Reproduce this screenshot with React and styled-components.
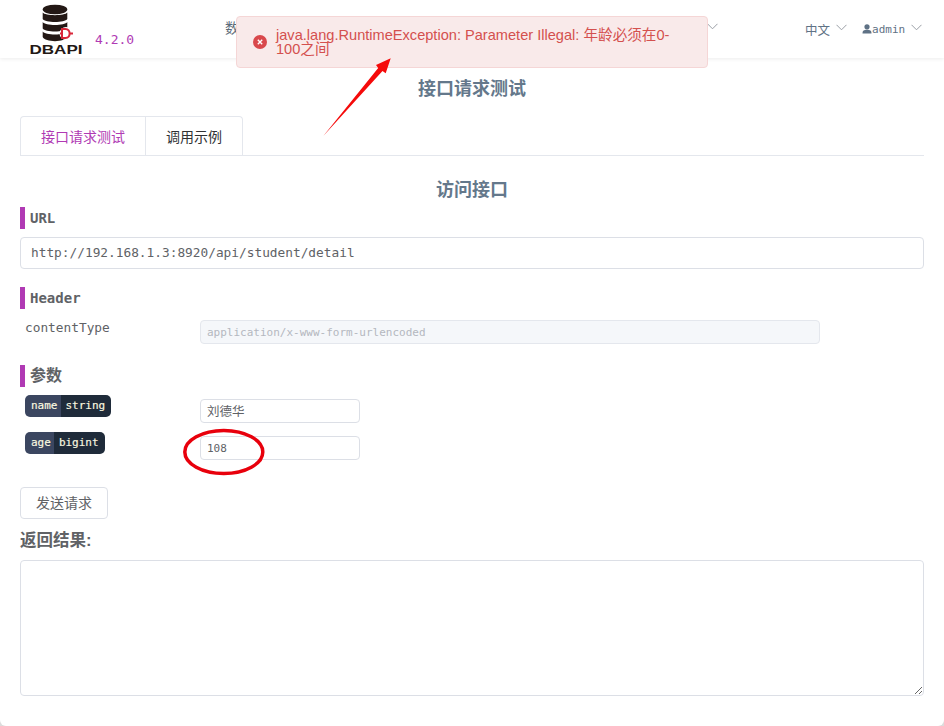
import React from "react";
import styled, { createGlobalStyle } from "styled-components";

const GlobalStyle = createGlobalStyle`
  html, body {
    margin: 0;
    padding: 0;
    background: #dcdcdc;
  }
  * {
    box-sizing: border-box;
  }
  body {
    font-family: "DejaVu Sans Mono", "Noto Sans CJK SC", monospace;
  }
`;

const cjkSans = `"Liberation Sans", "Noto Sans CJK SC", sans-serif`;
const mono = `"DejaVu Sans Mono", "Noto Sans CJK SC", monospace`;

const Page = styled.div`
  position: relative;
  width: 944px;
  height: 726px;
  overflow: hidden;
  background: #fff;
  border-radius: 0 0 6px 6px;
`;

const Header = styled.header`
  height: 58px;
  display: flex;
  align-items: flex-start;
  background: #fff;
  box-shadow: 0 1px 4px rgba(0, 0, 0, 0.08);
`;

const LogoBlock = styled.div`
  width: 66px;
  height: 54px;
  margin: 4px 0 0 29px;
`;

const Version = styled.span`
  margin: 33px 0 0 0;
  width: 130px;
  font-size: 13px;
  line-height: 14px;
  color: #b03ab4;
`;

const Nav = styled.nav`
  flex: 1;
  display: flex;
  justify-content: space-between;
  padding: 20px 0 0 0;
  color: #5c6b7a;
  font-family: ${cjkSans};
  font-size: 14px;
  line-height: 16px;
`;

const NavEnd = styled.div`
  margin: 0 87px 0 0;
  display: flex;
  align-items: center;
  height: 16px;
`;

const Chevron = ({ className }) => (
  <svg className={className} width="11" height="7" viewBox="0 0 11 7" fill="none">
    <path d="M0.5 0.8 L5.5 5.8 L10.5 0.8" stroke="#9a9fa6" strokeWidth="1" />
  </svg>
);

const HeaderChevron = styled(Chevron)`
  flex: none;
  margin: 0 0 3px 6px;
`;

const UserMenu = styled.div`
  flex: none;
  width: 139px;
  padding: 21px 0 0 0;
  display: flex;
  align-items: center;
  height: 37px;
  color: #5f7285;
`;

const Lang = styled.span`
  font-family: ${cjkSans};
  font-size: 12.5px;
  white-space: nowrap;
`;

const UserName = styled.span`
  display: inline-flex;
  align-items: center;
  font-size: 11px;
  margin-left: 15px;
`;

const Main = styled.main`
  padding: 0 20px;
`;

const PageTitle = styled.h2`
  margin: 0;
  padding-top: 20px;
  height: 58px;
  text-align: center;
  font: bold 18px/22px ${cjkSans};
  color: #64788b;
`;

const Tabs = styled.div`
  display: flex;
  height: 40px;
  border-bottom: 1px solid #e4e7ed;
`;

const Tab = styled.div`
  height: 40px;
  padding: 0 20px 2px;
  display: flex;
  align-items: center;
  font: 14px ${cjkSans};
  color: ${(p) => (p.$active ? "#b03ab4" : "#303133")};
  border: 1px solid #e4e7ed;
  border-bottom: none;
  border-left-width: ${(p) => (p.$active ? "1px" : "0")};
  border-radius: ${(p) => (p.$active ? "4px 0 0 0" : "0 4px 0 0")};
`;

const SectionTitle = styled.h2`
  margin: 23px 0 0;
  height: 24px;
  text-align: center;
  font: bold 18px/22px ${cjkSans};
  color: #64788b;
`;

const Mark = styled.div`
  display: flex;
  align-items: center;
  height: 22px;
  margin-top: ${(p) => p.$top}px;
  padding: 0 0 ${(p) => (p.$size ? 4 : 0)}px 5px;
  border-left: 5px solid #b03ab4;
  font-weight: bold;
  font-size: ${(p) => p.$size || 14}px;
  color: #606266;
`;

const UrlInput = styled.div`
  margin-top: 8px;
  height: 32px;
  padding: 0 10px 2px;
  display: flex;
  align-items: center;
  border: 1px solid #dcdfe6;
  border-radius: 4px;
  font-size: 12.8px;
  color: #606266;
`;

const ParamRow = styled.div`
  display: flex;
  align-items: flex-start;
  margin-top: ${(p) => p.$top}px;
`;

const ParamLabel = styled.div`
  width: 175px;
  margin-left: 5px;
  font-size: 12.8px;
  line-height: 16px;
  color: #606266;
`;

const ValueBox = styled.div`
  width: ${(p) => p.$width}px;
  height: ${(p) => p.$height}px;
  margin-top: ${(p) => p.$top || 0}px;
  padding: 0 6px ${(p) => (p.$size ? 2 : 0)}px;
  display: flex;
  align-items: center;
  border: 1px solid ${(p) => (p.$disabled ? "#e4e7ed" : "#dcdfe6")};
  border-radius: 4px;
  background: ${(p) => (p.$disabled ? "#f5f7fa" : "#fff")};
  color: ${(p) => (p.$disabled ? "#b4b8bf" : "#606266")};
  font-family: ${mono};
  font-size: ${(p) => p.$size || 11}px;
`;

const Badge = styled.span`
  display: inline-flex;
  height: 22px;
  border-radius: 5px;
  overflow: hidden;
  font-size: 11px;
  line-height: 22px;
  color: #fbfae0;
  -webkit-text-stroke: 0.15px #fbfae0;
`;

const BadgeName = styled.span`
  padding: 0 3px 0 6px;
  background: #3b4660;
`;

const BadgeType = styled.span`
  padding: 0 6px 0 5px;
  background: #1f2b3a;
`;

const SendButton = styled.button`
  display: block;
  margin-top: 27px;
  width: 88px;
  height: 32px;
  padding: 0 0 2px;
  background: #fff;
  border: 1px solid #dcdfe6;
  border-radius: 4px;
  color: #606266;
  font: 14px ${cjkSans};
`;

const ResultTitle = styled.h3`
  margin: 10px 0 0;
  height: 22px;
  font: bold 16.5px/22px ${cjkSans};
  color: #606266;
`;

const ResultArea = styled.textarea`
  display: block;
  margin-top: 9px;
  width: 904px;
  height: 136px;
  border: 1px solid #dcdfe6;
  border-radius: 4px;
  outline: none;
`;

const Toast = styled.div`
  position: absolute;
  left: 236px;
  top: 16px;
  width: 472px;
  height: 52px;
  padding: 11px 30px 0 39px;
  background: #f9eaea;
  border: 1px solid #f5d6d6;
  border-radius: 4px;
  font: 14.6px/14px ${cjkSans};
  color: #d4504e;
`;

const ToastIcon = styled.svg`
  position: absolute;
  left: 16px;
  top: 18px;
`;

const Annotation = styled.svg`
  position: absolute;
  left: 0;
  top: 0;
  pointer-events: none;
`;

const Logo = () => (
  <svg width="66" height="54" viewBox="0 0 66 54">
    <g fill="#231815">
      <ellipse cx="26" cy="5.5" rx="12.3" ry="4.8" />
      <path d="M13.7 8.5 C16 12 36 12 38.3 8.5 V15 C36 19 16 19 13.7 15 Z" />
      <path d="M13.7 18 C16 22 36 22 38.3 18 V24.5 C36 28.5 16 28.5 13.7 24.5 Z" />
      <path d="M13.7 27.5 C16 31.5 36 31.5 38.3 27.5 V33 C36 38.5 16 38.5 13.7 33 Z" />
    </g>
    <circle cx="37" cy="29.5" r="6.5" fill="#fff" />
    <path
      d="M33 25 H36.5 C42 25 42 34 36.5 34 H33 Z M31 29.5 H34 M40.5 29.5 H44"
      fill="none"
      stroke="#d9273a"
      strokeWidth="2"
    />
    <text x="0.5" y="50" fontFamily="Liberation Sans, sans-serif" fontWeight="bold" fontSize="13.5" textLength="53" lengthAdjust="spacingAndGlyphs" fill="#231815">DBAPI</text>
  </svg>
);

const App = () => (
  <Page>
    <GlobalStyle />
    <Header>
      <LogoBlock>
        <Logo />
      </LogoBlock>
      <Version>4.2.0</Version>
      <Nav>
        <span>数据源</span>
        <NavEnd>
          <HeaderChevron />
        </NavEnd>
      </Nav>
      <UserMenu>
        <Lang>中文</Lang>
        <HeaderChevron />
        <UserName>
          <svg width="10" height="10" viewBox="0 0 10 10" fill="#5f7285">
            <circle cx="5" cy="2.8" r="2.6" />
            <path d="M0.5 9.5 C0.5 6.5 2 5.8 5 5.8 C8 5.8 9.5 6.5 9.5 9.5 Z" />
          </svg>
          admin
        </UserName>
        <HeaderChevron />
      </UserMenu>
    </Header>
    <Main>
      <PageTitle>接口请求测试</PageTitle>
      <Tabs>
        <Tab $active>接口请求测试</Tab>
        <Tab>调用示例</Tab>
      </Tabs>
      <SectionTitle>访问接口</SectionTitle>
      <Mark $top={4}>URL</Mark>
      <UrlInput>http://192.168.1.3:8920/api/student/detail</UrlInput>
      <Mark $top={18}>Header</Mark>
      <ParamRow $top={11}>
        <ParamLabel>contentType</ParamLabel>
        <ValueBox $disabled $width={620} $height={24}>application/x-www-form-urlencoded</ValueBox>
      </ParamRow>
      <Mark $top={21} $size={16}>参数</Mark>
      <ParamRow $top={8}>
        <ParamLabel><Badge><BadgeName>name</BadgeName><BadgeType>string</BadgeType></Badge></ParamLabel>
        <ValueBox $width={160} $height={24} $top={4} $size={12.5}>刘德华</ValueBox>
      </ParamRow>
      <ParamRow $top={9}>
        <ParamLabel><Badge><BadgeName>age</BadgeName><BadgeType>bigint</BadgeType></Badge></ParamLabel>
        <ValueBox $width={160} $height={24} $top={4}>108</ValueBox>
      </ParamRow>
      <SendButton>发送请求</SendButton>
      <ResultTitle>返回结果:</ResultTitle>
      <ResultArea readOnly />
    </Main>
    <Toast>
      <ToastIcon width="14" height="14" viewBox="0 0 14 14">
        <circle cx="7" cy="7" r="7" fill="#d9484c" />
        <path d="M4.8 4.8 L9.2 9.2 M9.2 4.8 L4.8 9.2" stroke="#fff" strokeWidth="1.4" />
      </ToastIcon>
      java.lang.RuntimeException: Parameter Illegal: 年龄必须在0-100之间
    </Toast>
    <Annotation width="944" height="726" viewBox="0 0 944 726">
      <path d="M323.3 136 L378.2 68 L376 65 L390.7 58.3 L385.7 73.3 L382.5 71 Z" fill="#f50a0a" />
      <ellipse cx="223.8" cy="452" rx="39" ry="21.5" fill="none" stroke="#e8000c" strokeWidth="3.5" />
    </Annotation>
  </Page>
);

export default App;
